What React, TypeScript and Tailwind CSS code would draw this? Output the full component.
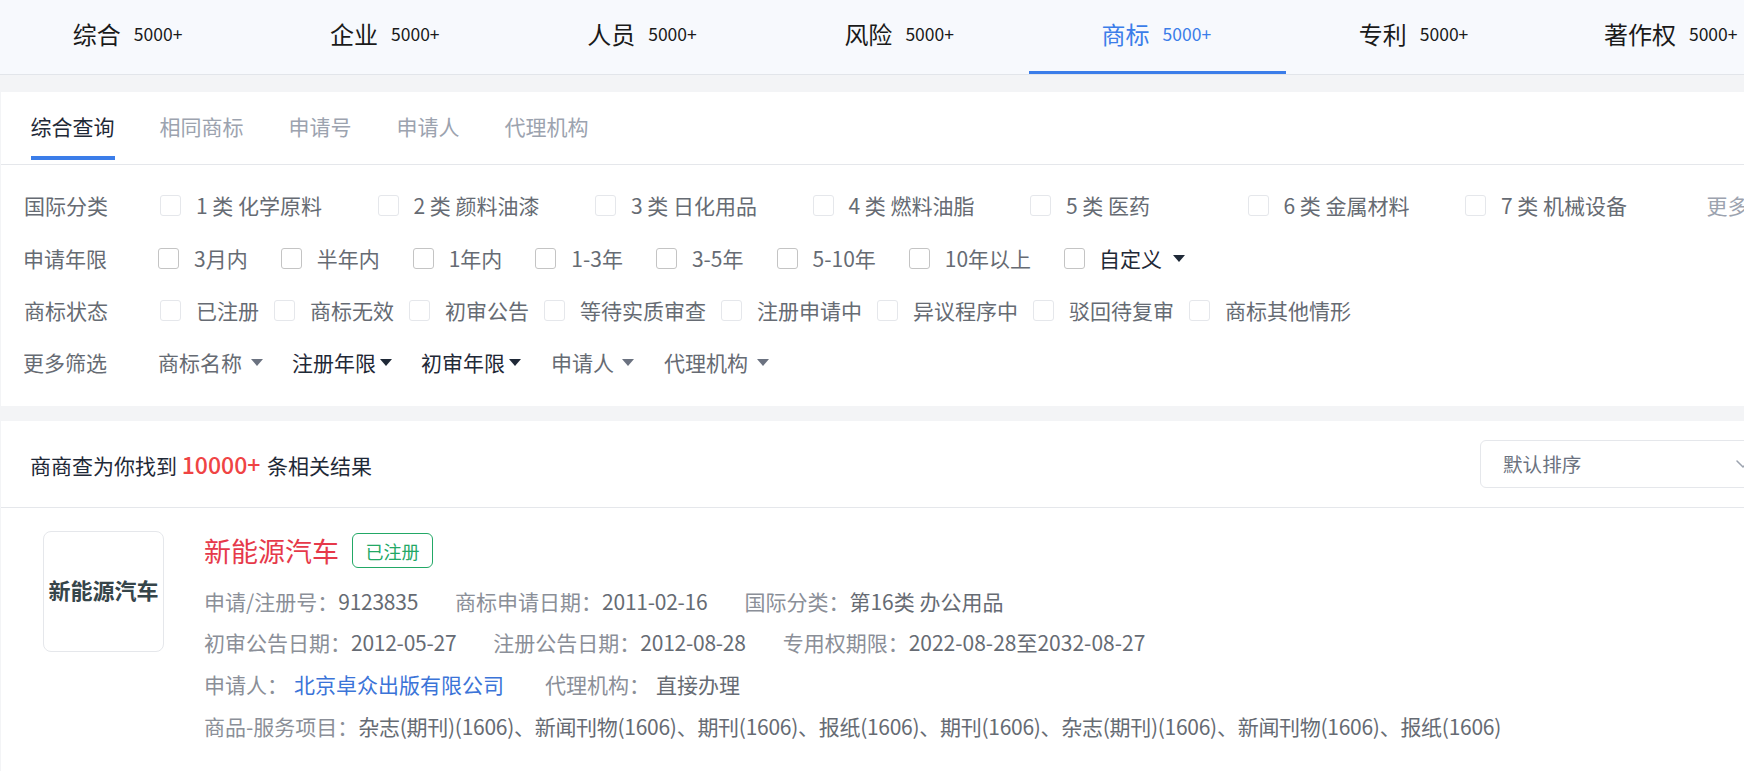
import { ChevronDown } from 'lucide-react';

const navTabs = [
  { name: '综合', count: '5000+' },
  { name: '企业', count: '5000+' },
  { name: '人员', count: '5000+' },
  { name: '风险', count: '5000+' },
  { name: '商标', count: '5000+', active: true },
  { name: '专利', count: '5000+' },
  { name: '著作权', count: '5000+' },
];

const subTabs = ['综合查询', '相同商标', '申请号', '申请人', '代理机构'];
const classes = ['1 类 化学原料', '2 类 颜料油漆', '3 类 日化用品', '4 类 燃料油脂', '5 类 医药', '6 类 金属材料', '7 类 机械设备'];
const years = ['3月内', '半年内', '1年内', '1-3年', '3-5年', '5-10年', '10年以上'];
const statuses = ['已注册', '商标无效', '初审公告', '等待实质审查', '注册申请中', '异议程序中', '驳回待复审', '商标其他情形'];

const Caret = ({ dark }: { dark?: boolean }) => (
  <span
    className={`w-0 h-0 border-x-[6px] border-x-transparent border-t-[7px] ${dark ? 'border-t-[#1f2937]' : 'border-t-[#6b7280]'}`}
  />
);

const Box = ({ strong }: { strong?: boolean }) => (
  <span className={`w-[21px] h-[21px] shrink-0 rounded-[3px] border bg-white ${strong ? 'border-[#c4c4c4]' : 'border-[#e5e7eb]'}`} />
);

export default function App() {
  return (
    <div className="h-[771px] overflow-hidden bg-[#f3f4f6] font-['Noto_Sans_CJK_SC',sans-serif] text-[21px] leading-[30px] text-[#666b73]">
      <nav className="flex h-[75px] bg-[#f7f9fd] border-b border-[#e2e5ea]">
        {navTabs.map((t) => (
          <div
            key={t.name}
            className={`w-[257.2px] shrink-0 h-[74px] flex items-center justify-center gap-[13px] pb-[3px] pr-[2px] border-b-[3px] ${t.active ? 'border-[#3b7de9] text-[#3b7de9]' : 'border-transparent text-[#1a1a1a]'}`}
          >
            <span className="text-[24px]">{t.name}</span>
            <span className="text-[17.5px]">{t.count}</span>
          </div>
        ))}
      </nav>

      <section className="mt-[17px] ml-px h-[314px] bg-white">
        <div className="flex gap-[45px] h-[73px] pl-[29.5px] border-b border-[#e5e7eb]">
          {subTabs.map((t, i) => (
            <div
              key={t}
              className={`h-[68px] pt-[19px] border-b-[4px] ${i === 0 ? 'border-[#3b7de9] text-[#1f2937]' : 'border-transparent text-[#9ca3af]'}`}
            >
              {t}
            </div>
          ))}
        </div>

        <div className="pt-[15px]">
          <div className="flex items-center h-[50px] mb-[2px] pl-[23px]">
            <span className="w-[136px] shrink-0">国际分类</span>
            <div className="grid grid-cols-[repeat(7,217.5px)]">
              {classes.map((c) => (
                <label key={c} className="flex items-center gap-[15px]">
                  <Box />
                  <span>{c}</span>
                </label>
              ))}
            </div>
            <span className="ml-[24px] whitespace-nowrap text-[#9ca3af]">更多</span>
          </div>

          <div className="flex items-center h-[52px] pl-[22px]">
            <span className="w-[135px] shrink-0">申请年限</span>
            <div className="flex items-center gap-[33px]">
              {years.map((y) => (
                <label key={y} className="flex items-center gap-[15px]">
                  <Box strong />
                  <span>{y}</span>
                </label>
              ))}
              <label className="flex items-center gap-[14px]">
                <Box strong />
                <span className="mr-[-3px] text-[#1f2937]">自定义</span>
                <Caret dark />
              </label>
            </div>
          </div>

          <div className="flex items-center h-[52px] pl-[23px]">
            <span className="w-[136px] shrink-0">商标状态</span>
            <div className="flex items-center gap-[15px]">
              {statuses.map((s) => (
                <label key={s} className="flex items-center gap-[15px]">
                  <Box />
                  <span>{s}</span>
                </label>
              ))}
            </div>
          </div>

          <div className="flex items-center h-[52px] pl-[22px]">
            <span className="w-[135px] shrink-0">更多筛选</span>
            <div className="flex items-center">
              <span className="flex items-center gap-[9px] mr-[29px]">商标名称 <Caret /></span>
              <span className="flex items-center gap-[4px] mr-[29px] text-[#1f2937]">注册年限<Caret dark /></span>
              <span className="flex items-center gap-[4px] mr-[30px] text-[#1f2937]">初审年限<Caret dark /></span>
              <span className="flex items-center gap-[8px] mr-[30px]">申请人 <Caret /></span>
              <span className="flex items-center gap-[9px]">代理机构 <Caret /></span>
            </div>
          </div>
        </div>
      </section>

      <section className="mt-[15px] ml-px h-[350px] bg-white">
        <div className="flex items-center justify-between h-[87px] pl-[29px] border-b border-[#e5e7eb]">
          <p className="text-[#1f2937]">
            商商查为你找到 <span className="mr-[2px] text-[23px] font-medium text-[#ef4444]">10000+</span> 条相关结果
          </p>
          <div className="flex items-center justify-between w-[280px] shrink-0 h-[48px] -mr-[16px] pl-[22px] pr-[4px] rounded-md border border-[#e5e7eb] text-[19.6px] text-[#6b7280]">
            默认排序
            <ChevronDown size={24} strokeWidth={1.5} className="text-[#9ca3af]" />
          </div>
        </div>

        <div className="flex pt-[23px] pl-[42px]">
          <div className="w-[121px] h-[121px] shrink-0 pt-[42px] rounded-lg border border-[#e5e7eb] text-center text-[22px] font-bold text-[#36454a]">
            新能源汽车
          </div>
          <div className="pl-[40px]">
            <div className="flex items-center gap-[13px] h-[39px]">
              <h2 className="text-[27px] text-[#e6394a]">新能源汽车</h2>
              <span className="flex items-center justify-center w-[81px] h-[35px] rounded-md border border-[#22a866] text-[18px] text-[#22a866]">已注册</span>
            </div>
            <div className="flex gap-[37px] mt-[10px] h-[41.6px] items-center">
              <p><span className="text-[#8b8f98]">申请/注册号：</span><span className="tracking-[-0.25px]">9123835</span></p>
              <p><span className="text-[#8b8f98]">商标申请日期：</span><span className="tracking-[-0.25px]">2011-02-16</span></p>
              <p><span className="text-[#8b8f98]">国际分类：</span>第16类 办公用品</p>
            </div>
            <div className="flex gap-[37px] h-[41.6px] items-center">
              <p><span className="text-[#8b8f98]">初审公告日期：</span><span className="tracking-[-0.25px]">2012-05-27</span></p>
              <p><span className="text-[#8b8f98]">注册公告日期：</span><span className="tracking-[-0.25px]">2012-08-28</span></p>
              <p><span className="text-[#8b8f98]">专用权期限：</span>2022-08-28至2032-08-27</p>
            </div>
            <div className="flex gap-[41px] h-[41.6px] items-center">
              <p><span className="mr-[6px] text-[#8b8f98]">申请人：</span><span className="text-[#3b74d8]">北京卓众出版有限公司</span></p>
              <p><span className="mr-[6px] text-[#8b8f98]">代理机构：</span>直接办理</p>
            </div>
            <p className="flex h-[41.6px] items-center whitespace-nowrap">
              <span className="text-[#8b8f98]">商品-服务项目：</span>
              <span className="tracking-[-0.28px]">杂志(期刊)(1606)、新闻刊物(1606)、期刊(1606)、报纸(1606)、期刊(1606)、杂志(期刊)(1606)、新闻刊物(1606)、报纸(1606)</span>
            </p>
          </div>
        </div>
      </section>
    </div>
  );
}
